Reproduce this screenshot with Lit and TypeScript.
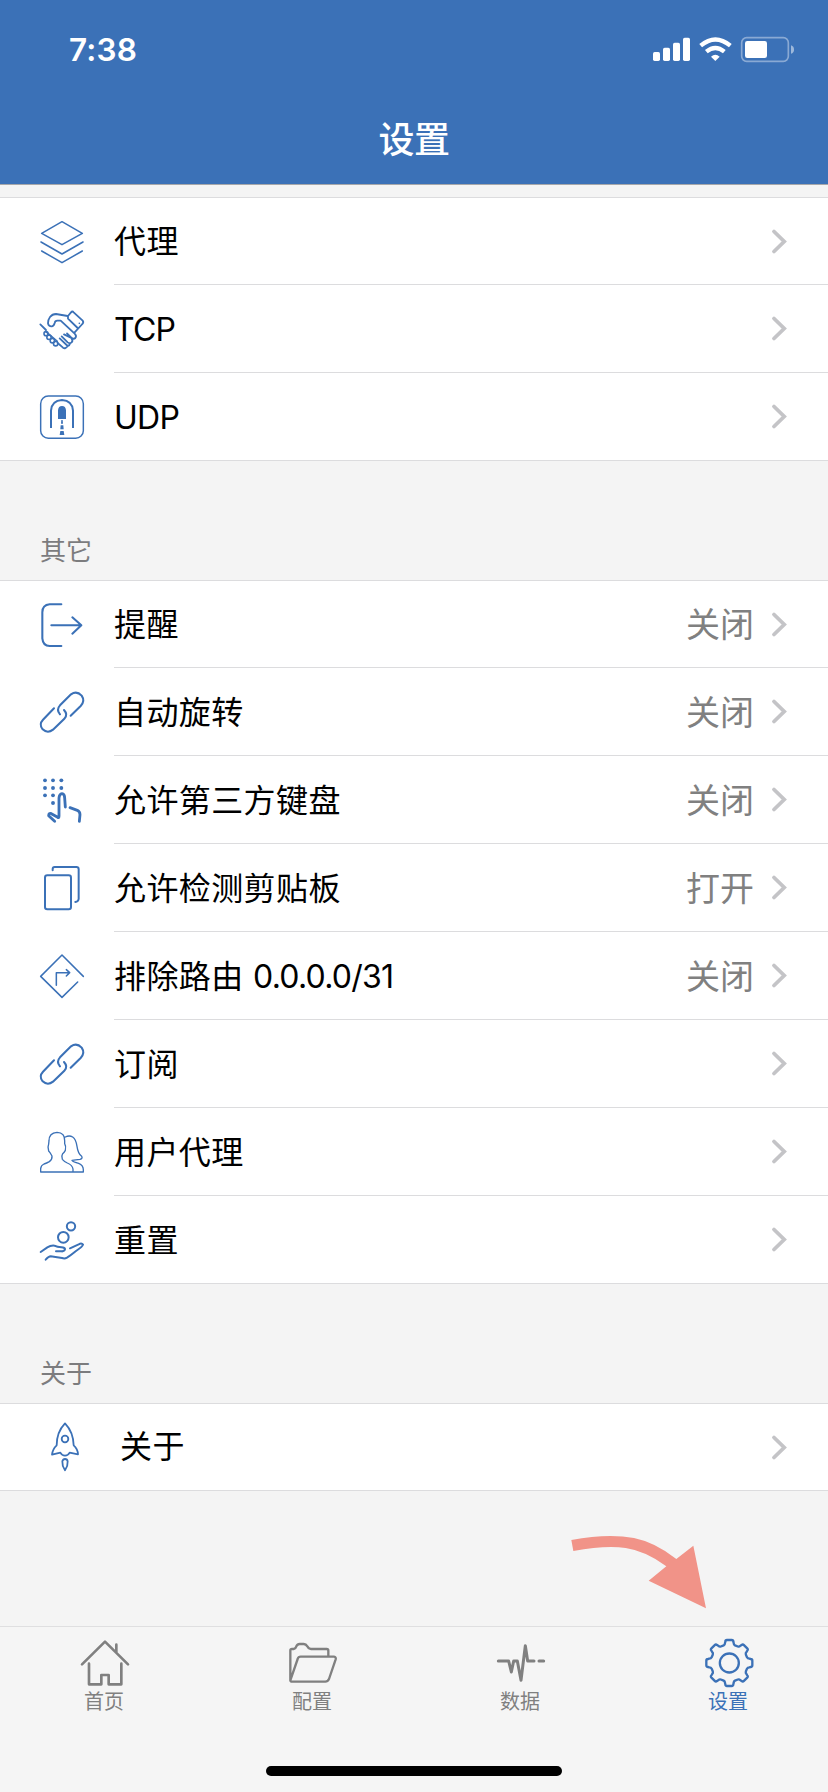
import { LitElement, html, css, svg, nothing } from "lit";
import { customElement } from "lit/decorators.js";

interface Icon {
  box: string;
  art: unknown;
}

interface Row {
  icon: string;
  label: string;
  value?: string;
}

const gearPath = (cx: number, cy: number): string => {
  const parts: string[] = [];
  for (let i = 0; i < 8; i++) {
    const a = (i * Math.PI) / 4;
    const p = (x: number, y: number) =>
      `${(cx + x * Math.cos(a) - y * Math.sin(a)).toFixed(1)} ${(cy + x * Math.sin(a) + y * Math.cos(a)).toFixed(1)}`;
    parts.push(
      `${i ? "L" : "M"}${p(-17, -53)} Q${p(-13, -55)} ${p(-13, -60)} L${p(-12, -64)} Q${p(-12, -69)} ${p(-7, -69)} L${p(7, -69)} Q${p(12, -69)} ${p(12, -64)} L${p(13, -60)} Q${p(13, -55)} ${p(17, -53)}`
    );
  }
  return parts.join(" ") + "Z";
};

const link = svg`<path stroke-width="6.2" d="M152 588L182 559Q196 544 185 528Q170 512 153 524L120 557Q108 570 120 584M102 566L69 600Q56 614 68 629Q83 643 99 630L133 597Q145 585 132 571"/>`;

const icons: Record<string, Icon> = {
  layers: {
    box: "60 88 132 132",
    art: svg`<path stroke-width="4.6" d="M126 93L187 128L126 162L65 128ZM63 154L126 190L189 154M65 181L126 216L187 181"/>`,
  },
  shake: {
    box: "60 350 132 132",
    art: svg`<path stroke-width="5.4" d="M144 377L153 366Q157 361 161 366L188 391Q192 396 187 401L164 426M144 377V385L173 413M143 377L108 371Q97 371 90 380Q84 388 84 399Q86 409 96 408Q102 407 104 398Q105 391 112 391H122L164 430Q171 437 166 443Q160 448 154 442L141 429M166 443Q162 447 157 444M157 444L132 432M155 445Q160 452 154 457Q149 461 143 456L125 438M150 460Q149 466 143 467L119 444M143 467Q136 477 129 472L113 458M61 402L78 419"/>
      <g stroke-width="4.8"><circle cx="78" cy="430" r="6"/><circle cx="87" cy="441" r="6.5"/><circle cx="97" cy="451" r="6.5"/><circle cx="107" cy="460" r="6.5"/><path d="M77 423L112 453"/></g>
      <circle cx="178" cy="399" r="2.5" fill="currentColor" stroke="none"/>`,
  },
  tunnel: {
    box: "60 615 132 132",
    art: svg`<rect x="62" y="618" width="128" height="127" rx="23" stroke-width="4.4"/><path stroke-width="6" stroke-linecap="butt" d="M93 714V662Q95 632 126 630Q157 632 159 662V714"/><path fill="currentColor" stroke="none" d="M114 687V661Q115 648 126 648Q137 648 138 661V687ZM124 690h4l1 11h-6zM122 706h8l1 12h-10zM121 723h10l2 12h-14z"/>`,
  },
  exit: {
    box: "62 246 132 132",
    art: svg`<path stroke-width="6.2" d="M126 250H91Q69 252 69 274V352Q71 375 91 375H126M96 313H185M159 289L186 313L159 338"/>`,
  },
  link: { box: "60 511 132 132", art: link },
  keypad: {
    box: "60 84 132 132",
    art: svg`<path stroke-width="8.5" d="M104 214L86 197Q86 188 94 191L113 202Q117 205 117 198V144Q118 132 126 131Q134 132 134 144L136 171M150 173L172 181Q180 185 180 194L178 214"/>
      <g fill="currentColor" stroke="none">${[[75, 91], [99, 91], [124, 91], [75, 114], [99, 114], [124, 114], [75, 136], [99, 136], [99, 159]].map(
        ([x, y]) => svg`<circle cx=${x} cy=${y} r="5.8"/>`
      )}</g>`,
  },
  pages: {
    box: "61 348 132 132",
    art: svg`<rect x="76" y="376" width="78" height="102" rx="7" stroke-width="6"/><path stroke-width="6" d="M99 361V357Q99 351 105 351H170Q177 351 177 358V447Q176 455 167 456"/>`,
  },
  route: {
    box: "60 613 132 132",
    art: svg`<path stroke-width="4.6" d="M190 680L126 616L62 680L126 743L173 697M109 707V669H149M139 660L149 669L139 679"/>`,
  },
  people: {
    box: "60 361 132 132",
    art: svg`<path stroke-width="4" d="M62 487V477Q63 467 72 463Q80 461 88 456Q97 450 96 439Q90 428 86 424Q82 412 86 403L87 393Q87 370 111 368Q135 369 134 393V402Q139 410 136 422Q133 428 128 432Q123 440 127 449Q133 456 142 460Q157 466 159 478V487ZM136 382Q148 376 158 382Q168 389 171 410Q174 432 185 440Q189 446 180 449Q166 451 156 452Q160 457 176 461Q190 467 190 480V487H159"/>`,
  },
  coins: {
    box: "60 623 132 132",
    art: svg`<path stroke-width="6" d="M62 725L82 711Q92 705 103 706Q112 710 124 711Q136 712 135 717Q133 724 124 723H108M150 714L176 702Q185 697 189 703Q188 709 168 722Q152 735 141 742Q134 746 126 743L92 738Q86 738 77 748"/><circle cx="130" cy="681" r="16" stroke-width="6"/><circle cx="153" cy="648" r="12.5" stroke-width="6"/>`,
  },
  rocket: {
    box: "60 255 132 132",
    art: svg`<path stroke-width="5.4" d="M135 250Q110 276 110 316Q98 327 96 344L121 338Q126 347 135 347Q144 347 149 338L174 343Q173 326 161 316Q160 276 135 250ZM135 391Q126 378 127 364Q129 357 135 357Q142 357 143 364Q144 378 135 391Z"/><circle cx="135" cy="297" r="10" stroke-width="5.4"/>`,
  },
  home: {
    box: "123 87 144 144",
    art: svg`<path stroke-width="8" d="M126 163L195 95L264 163M229 104V127M147 161V223H184V195H206V223H244V161"/>`,
  },
  folder: {
    box: "747 87 144 144",
    art: svg`<path stroke-width="7" d="M751 211V121Q751 117 756 117H761Q767 116 769 109Q772 102 779 102H791Q798 102 802 109Q806 117 813 117H860Q865 117 865 122V139M751 211L773 147Q775 140 782 140H882Q889 141 887 148L867 207Q863 215 856 215H757Q750 215 751 209"/>`,
  },
  pulse: {
    box: "51 87 144 144",
    art: svg`<path stroke-width="9" d="M55 153H86L94 186L101 153H112L123 211L136 107L143 153H162M177 153H191"/>`,
  },
  gear: {
    box: "494 387 144 144",
    art: svg`<path stroke-width="7" d=${gearPath(567, 459)}/><circle cx="567" cy="459" r="28.5" stroke-width="7"/>`,
  },
};

const drawIcon = (name: string) => html`<svg
  class="icon"
  viewBox=${icons[name].box}
  fill="none"
  stroke="currentColor"
  stroke-linecap="round"
  stroke-linejoin="round"
>${icons[name].art}</svg>`;

const network: Row[] = [
  { icon: "layers", label: "代理" },
  { icon: "shake", label: "TCP" },
  { icon: "tunnel", label: "UDP" },
];

const other: Row[] = [
  { icon: "exit", label: "提醒", value: "关闭" },
  { icon: "link", label: "自动旋转", value: "关闭" },
  { icon: "keypad", label: "允许第三方键盘", value: "关闭" },
  { icon: "pages", label: "允许检测剪贴板", value: "打开" },
  { icon: "route", label: "排除路由 0.0.0.0/31", value: "关闭" },
  { icon: "link", label: "订阅" },
  { icon: "people", label: "用户代理" },
  { icon: "coins", label: "重置" },
];

const about: Row[] = [{ icon: "rocket", label: "关于" }];

const tabs = [
  { icon: "home", label: "首页" },
  { icon: "folder", label: "配置" },
  { icon: "pulse", label: "数据" },
  { icon: "gear", label: "设置" },
];

// Latin runs are tracked tighter than the Chinese text around them.
const setLabel = (text: string) =>
  text
    .split(/([!-~]+)/)
    .filter(Boolean)
    .map((run) => (/^[!-~]/.test(run) ? html`<span class="latin">${run}</span>` : run));

@customElement("app-root")
export class AppRoot extends LitElement {
  static styles = css`
    :host {
      display: flex;
      flex-direction: column;
      position: relative;
      box-sizing: border-box;
      width: 828px;
      height: 1792px;
      overflow: hidden;
      background: #f4f4f4;
      color: #000;
      font-family: Inter, "Noto Sans CJK SC", sans-serif;
    }
    * {
      box-sizing: border-box;
    }
    svg {
      display: block;
      overflow: visible;
      flex: none;
    }
    header {
      height: 185px;
      flex: none;
      background: #3b71b7;
      border-bottom: 1px solid #a6a7aa;
      color: #fff;
    }
    .status {
      height: 98px;
      padding: 0 33px 0 69px;
      display: flex;
      align-items: center;
      justify-content: space-between;
    }
    .time {
      font-size: 31.5px;
      font-weight: 600;
      letter-spacing: 0.2px;
    }
    .signals {
      width: 143px;
      height: 27px;
    }
    h1 {
      margin: 0;
      height: 84px;
      line-height: 84px;
      font-size: 36px;
      font-weight: 500;
      text-align: center;
      letter-spacing: -0.4px;
    }
    main {
      flex: 1;
      padding-top: 12px;
    }
    .group {
      background: #fff;
      border-top: 1px solid #dcdcde;
      border-bottom: 1px solid #dcdcde;
    }
    .row {
      height: 88px;
      display: flex;
      align-items: stretch;
    }
    .row:first-child {
      height: 87px;
    }
    .row:last-child {
      height: 87px;
    }
    .row:only-child {
      height: 86px;
    }
    .mark {
      width: 114px;
      padding-left: 40px;
      display: flex;
      align-items: center;
      color: #3b71b7;
    }
    .mark .icon {
      width: 44px;
      height: 44px;
    }
    .body {
      flex: 1;
      display: flex;
      align-items: center;
      padding-right: 41px;
      border-bottom: 1px solid #dcdcde;
    }
    .row:last-child .body {
      border-bottom: 0;
    }
    .row.inset .mark {
      padding-left: 40px;
    }
    .row.inset .body {
      padding-left: 6px;
    }
    .label {
      flex: 1;
      font-size: 32px;
      line-height: 48px;
      letter-spacing: 0.4px;
      padding-top: 2px;
    }
    .row.inset .label {
      padding-top: 0;
    }
    .latin {
      letter-spacing: -0.75px;
    }
    .value {
      font-size: 34px;
      line-height: 48px;
      color: #808080;
      margin-right: 18px;
      padding-top: 2px;
    }
    .chevron {
      width: 15px;
      height: 25px;
      color: #c4c4c7;
    }
    h2 {
      margin: 0;
      height: 119px;
      padding: 71px 0 0 40px;
      font-size: 26px;
      line-height: 38px;
      font-weight: 400;
      color: #7c7c7e;
    }
    nav {
      height: 166px;
      flex: none;
      border-top: 1px solid #dfdfe0;
      background: #f5f5f5;
      display: flex;
      flex-direction: column;
      align-items: center;
      justify-content: space-between;
      padding-bottom: 16px;
    }
    .tabs {
      align-self: flex-start;
      display: grid;
      grid-template-columns: repeat(4, 208px);
      padding-top: 12px;
    }
    .tab {
      display: flex;
      flex-direction: column;
      align-items: center;
      color: #808080;
    }
    .tab.active {
      color: #3b71b7;
    }
    .tab .icon {
      width: 48px;
      height: 48px;
      margin-left: 2px;
    }
    .tab span {
      font-size: 20px;
      line-height: 30px;
    }
    .grip {
      width: 296px;
      height: 10px;
      border-radius: 5px;
      background: #000;
    }
    .pointer {
      position: absolute;
      left: 540px;
      top: 1510px;
      width: 180px;
      height: 110px;
    }
  `;

  private renderGroup(rows: Row[], inset = false) {
    return html`<section class="group">
      ${rows.map(
        (r) => html`<div class="row ${inset ? "inset" : ""}">
          <div class="mark">${drawIcon(r.icon)}</div>
          <div class="body">
            <span class="label">${setLabel(r.label)}</span>
            ${r.value ? html`<span class="value">${r.value}</span>` : nothing}
            <svg class="chevron" viewBox="0 0 15 25" fill="none" stroke="currentColor" stroke-width="3.8" stroke-linecap="round">
              <path d="M2 2.5L12.2 12.5L2 22.5" />
            </svg>
          </div>
        </div>`
      )}
    </section>`;
  }

  render() {
    return html`
      <header>
        <div class="status">
          <span class="time">7:38</span>
          <svg class="signals" viewBox="36 48 429 81" fill="#fff">
            <rect x="39" y="96" width="21" height="27" rx="5" />
            <rect x="69" y="83" width="21" height="40" rx="5" />
            <rect x="99" y="68" width="21" height="55" rx="5" />
            <rect x="129" y="53" width="21" height="70" rx="5" />
            <g fill="none" stroke="#fff" stroke-width="13">
              <path d="M182 77Q226 40 271 77" />
              <path d="M199 95Q226 73 253 95" />
            </g>
            <path d="M213 110Q226 98 239 110L226 123Z" />
            <rect x="305" y="53" width="140" height="71" rx="15" fill="none" stroke="#fff" stroke-opacity=".4" stroke-width="5" />
            <rect x="315" y="63" width="66" height="51" rx="7" />
            <path d="M453 76Q462 79 462 89Q462 98 453 101Z" fill-opacity=".5" />
          </svg>
        </div>
        <h1>设置</h1>
      </header>
      <main>
        ${this.renderGroup(network)}
        <h2>其它</h2>
        ${this.renderGroup(other)}
        <h2>关于</h2>
        ${this.renderGroup(about, true)}
      </main>
      <nav>
        <div class="tabs">
          ${tabs.map(
            (t) => html`<div class="tab ${t.icon === "gear" ? "active" : ""}">${drawIcon(t.icon)}<span>${t.label}</span></div>`
          )}
        </div>
        <div class="grip"></div>
      </nav>
      <svg class="pointer" viewBox="0 0 540 330" fill="#f19388">
        <path d="M94 90Q204 69 282 84Q346 97 409 147L460 107L498 295L326 212L379 169Q318 123 257 114Q197 105 100 123Z" />
      </svg>
    `;
  }
}
